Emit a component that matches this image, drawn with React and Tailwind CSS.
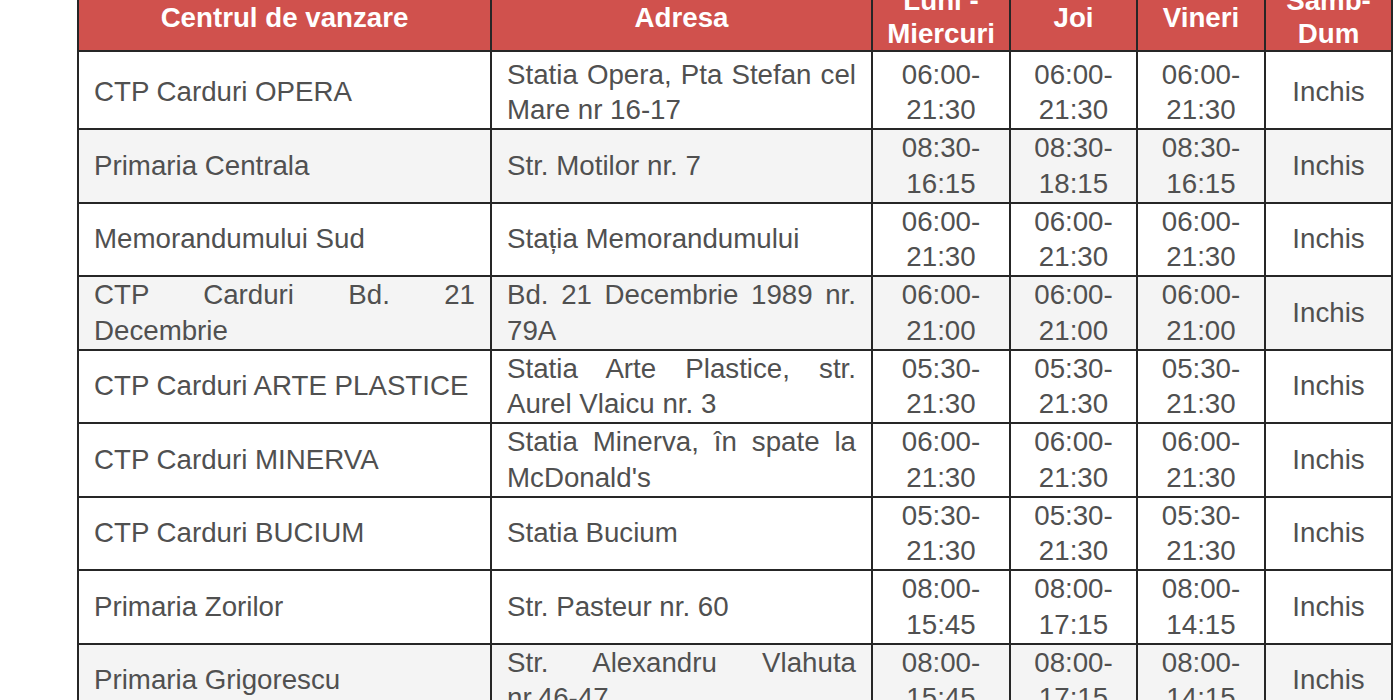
import React from "react";

const rows = [
  { name: "CTP Carduri OPERA", addr: "Statia Opera, Pta Stefan cel Mare nr 16-17", a: "06:00-21:30", b: "06:00-21:30", c: "06:00-21:30", grey: false },
  { name: "Primaria Centrala", addr: "Str. Motilor nr. 7", a: "08:30-16:15", b: "08:30-18:15", c: "08:30-16:15", grey: true },
  { name: "Memorandumului Sud", addr: "Stația Memorandumului", a: "06:00-21:30", b: "06:00-21:30", c: "06:00-21:30", grey: false },
  { name: "CTP Carduri Bd. 21 Decembrie", addr: "Bd. 21 Decembrie 1989 nr. 79A", a: "06:00-21:00", b: "06:00-21:00", c: "06:00-21:00", grey: true },
  { name: "CTP Carduri ARTE PLASTICE", addr: "Statia Arte Plastice, str. Aurel Vlaicu nr. 3", a: "05:30-21:30", b: "05:30-21:30", c: "05:30-21:30", grey: false },
  { name: "CTP Carduri MINERVA", addr: "Statia Minerva, în spate la McDonald's", a: "06:00-21:30", b: "06:00-21:30", c: "06:00-21:30", grey: false },
  { name: "CTP Carduri BUCIUM", addr: "Statia Bucium", a: "05:30-21:30", b: "05:30-21:30", c: "05:30-21:30", grey: false },
  { name: "Primaria Zorilor", addr: "Str. Pasteur nr. 60", a: "08:00-15:45", b: "08:00-17:15", c: "08:00-14:15", grey: false },
  { name: "Primaria Grigorescu", addr: "Str. Alexandru Vlahuta nr.46-47", a: "08:00-15:45", b: "08:00-17:15", c: "08:00-14:15", grey: true },
  { name: "Primaria Manastur", addr: "Str. Primaverii nr. 1", a: "08:00-15:45", b: "08:00-17:15", c: "08:00-14:15", grey: false },
];

const th = "border-2 border-[#262626] px-1 pt-[3px] pb-0 text-center align-middle font-bold text-white leading-[33px]";
const tdL = "border-2 border-[#262626] px-[15px] align-middle text-justify";
const tdC = "border-2 border-[#262626] px-[6px] align-middle text-center";

export default function App() {
  return (
    <div className="h-[700px] w-[1400px] overflow-hidden bg-white">
      <table
        className="-mt-[21px] ml-[77px] w-[1316px] table-fixed border-collapse text-[27.7px] leading-[35.75px] text-[#505050]"
        style={{ fontFamily: '"Liberation Sans", Arial, sans-serif' }}
      >
        <colgroup>
          <col className="w-[413px]" />
          <col className="w-[381px]" />
          <col className="w-[138px]" />
          <col className="w-[127px]" />
          <col className="w-[128px]" />
          <col className="w-[127px]" />
        </colgroup>
        <thead>
          <tr className="bg-[#d0514d]">
            <th className={th}>Centrul de vanzare</th>
            <th className={th}>Adresa</th>
            <th className={th}>Luni - Miercuri</th>
            <th className={th}>Joi</th>
            <th className={th}>Vineri</th>
            <th className={th}>Samb-Dum</th>
          </tr>
        </thead>
        <tbody>
          {rows.map((r, i) => {
            const pad = i === 0 ? "pt-[4.5px] pb-0" : "py-0";
            return (
              <tr key={i} className={r.grey ? "bg-[#f4f4f4]" : "bg-white"}>
                <td className={`${tdL} ${pad}`}>{r.name}</td>
                <td className={`${tdL} ${pad}`}>{r.addr}</td>
                <td className={`${tdC} ${pad}`}>{r.a}</td>
                <td className={`${tdC} ${pad}`}>{r.b}</td>
                <td className={`${tdC} ${pad}`}>{r.c}</td>
                <td className={`${tdC} ${pad}`}>Inchis</td>
              </tr>
            );
          })}
        </tbody>
      </table>
    </div>
  );
}
